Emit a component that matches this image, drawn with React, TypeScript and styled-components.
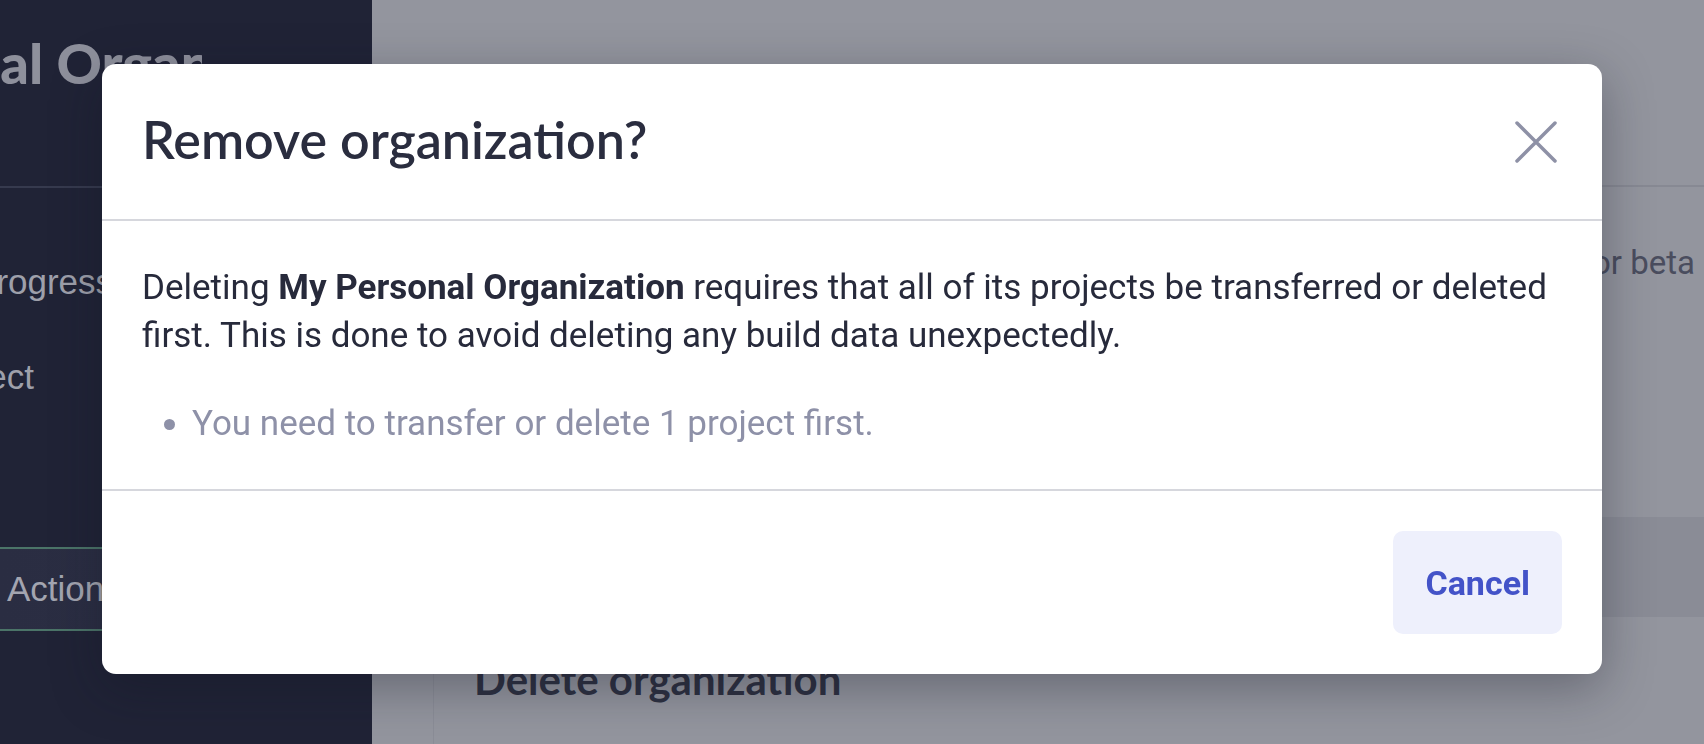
import React from 'react';
import styled, { createGlobalStyle } from 'styled-components';

const GlobalStyle = createGlobalStyle`
  html, body {
    margin: 0;
    height: 100%;
    overflow: hidden;
  }
  #root {
    height: 100%;
  }
`;

const Page = styled.div`
  display: grid;
  grid-template-columns: 372px 1fr;
  height: 100vh;
  overflow: hidden;
`;

const Sidebar = styled.aside`
  background: #202336;
  overflow: hidden;
  display: flex;
  flex-direction: column;
`;

const SidebarHead = styled.div`
  height: 188px;
  box-sizing: border-box;
  padding-top: 31px;
  border-bottom: 2px solid #363a4e;
`;

const OrgName = styled.div`
  width: 470px;
  overflow: hidden;
  font-family: Lato, 'Noto Sans', sans-serif;
  font-weight: 900;
  font-size: 56px;
  line-height: 64px;
  color: #8e909c;
  white-space: nowrap;
  margin-left: -268px;
`;

const NavList = styled.nav`
  display: flex;
  flex-direction: column;
  gap: 47px;
  padding-top: 70px;
`;

const NavItem = styled.div<{ $indent: number }>`
  font-family: 'Liberation Sans', Arial, sans-serif;
  font-size: 35px;
  line-height: 48px;
  color: #9ea0ab;
  white-space: nowrap;
  margin-left: ${(p) => p.$indent}px;
`;

const ActionsButton = styled.div`
  margin-top: 146px;
  height: 80px;
  display: flex;
  align-items: center;
  padding-left: 7px;
  border-top: 2px solid #4b7468;
  border-bottom: 2px solid #4b7468;
  background: linear-gradient(90deg, #2a2d42, #2d3045);
  font-family: 'Liberation Sans', Arial, sans-serif;
  font-size: 35px;
  color: #a3a5b0;
  white-space: nowrap;
`;

const Main = styled.main`
  background: #93959e;
  display: flex;
  flex-direction: column;
  overflow: hidden;
`;

const MainHeader = styled.header`
  height: 187px;
  box-sizing: border-box;
  padding: 55px 0 0 76px;
  border-bottom: 2px solid #878993;
`;

const MainTitle = styled.h1`
  margin: 0;
  font-family: Lato, 'Noto Sans', sans-serif;
  font-weight: 700;
  font-size: 52px;
  color: #2d3041;
  white-space: nowrap;
`;

const Content = styled.div`
  flex: 1;
  display: flex;
  padding-left: 61px;
`;

const Card = styled.section`
  flex: 1;
  display: flex;
  flex-direction: column;
  border-left: 1px solid #8b8d97;
`;

const InfoRow = styled.div`
  height: 330px;
  box-sizing: border-box;
  padding: 52px 9px 0 0;
  text-align: right;
  font-family: Roboto, 'Liberation Sans', sans-serif;
  font-size: 33px;
  line-height: 48px;
  color: #4a4d5e;
  white-space: nowrap;
  overflow: hidden;
`;

const Band = styled.div`
  height: 100px;
  background: #8a8c96;
`;

const DangerSection = styled.div`
  padding: 37px 0 0 40px;
`;

const SectionTitle = styled.h2`
  margin: 0;
  font-family: Lato, 'Noto Sans', sans-serif;
  font-weight: 700;
  font-size: 42px;
  color: #2e3142;
  white-space: nowrap;
`;

const Backdrop = styled.div`
  position: fixed;
  inset: 0;
  padding-bottom: 6px;
  display: flex;
  align-items: center;
  justify-content: center;
`;

const Modal = styled.div`
  width: 1500px;
  background: #ffffff;
  border-radius: 14px;
  box-shadow: 0 14px 50px rgba(18, 20, 34, 0.35);
  display: flex;
  flex-direction: column;
  overflow: hidden;
`;

const ModalHeader = styled.div`
  height: 155px;
  padding: 0 45px 0 40px;
  display: flex;
  align-items: center;
  justify-content: space-between;
  border-bottom: 2px solid #d6d7dd;
`;

const ModalTitle = styled.h2`
  margin: 0 0 5px;
  font-family: Lato, 'Noto Sans', sans-serif;
  font-weight: 600;
  font-size: 52px;
  color: #2a2d3f;
`;

const CloseButton = styled.button`
  width: 42px;
  height: 42px;
  padding: 0;
  border: none;
  background: none;
  cursor: pointer;
  display: flex;
`;

const ModalBody = styled.div`
  padding: 43px 40px 41px;
  border-bottom: 2px solid #d6d7dd;
  font-family: Roboto, 'Liberation Sans', sans-serif;
  font-size: 35px;
  line-height: 48px;
`;

const Message = styled.p`
  margin: 0 0 40px;
  color: #272a3b;

  strong {
    font-weight: 700;
  }
`;

const Reasons = styled.ul`
  margin: 0;
  padding-left: 50px;
  color: #8e91a8;
`;

const ModalFooter = styled.div`
  padding: 40px;
  display: flex;
  justify-content: flex-end;
`;

const CancelButton = styled.button`
  height: 103px;
  padding: 0 32px;
  border: none;
  border-radius: 10px;
  background: #eef0fc;
  color: #4353c8;
  font-family: Roboto, 'Liberation Sans', sans-serif;
  font-weight: 700;
  font-size: 34px;
  cursor: pointer;
`;

const CloseIcon = () => (
  <svg width="42" height="42" viewBox="0 0 42 42" fill="none">
    <path d="M2 2L40 40M40 2L2 40" stroke="#8e91a6" strokeWidth="3.5" strokeLinecap="round" />
  </svg>
);

const App: React.FC = () => {
  return (
    <>
      <GlobalStyle />
      <Page>
        <Sidebar>
          <SidebarHead>
            <OrgName>My Personal Organization</OrgName>
          </SidebarHead>
          <NavList>
            <NavItem $indent={-62}>In progress</NavItem>
            <NavItem $indent={-75}>Project</NavItem>
          </NavList>
          <ActionsButton>Actions</ActionsButton>
        </Sidebar>
        <Main>
          <MainHeader>
            <MainTitle>Organization settings</MainTitle>
          </MainHeader>
          <Content>
            <Card>
              <InfoRow>This organization is signed up for beta</InfoRow>
              <Band />
              <DangerSection>
                <SectionTitle>Delete organization</SectionTitle>
              </DangerSection>
            </Card>
          </Content>
        </Main>
      </Page>

      <Backdrop>
        <Modal role="dialog" aria-modal="true">
          <ModalHeader>
            <ModalTitle>Remove organization?</ModalTitle>
            <CloseButton aria-label="Close">
              <CloseIcon />
            </CloseButton>
          </ModalHeader>
          <ModalBody>
            <Message>
              Deleting <strong>My Personal Organization</strong> requires that all of its projects be
              transferred or deleted first. This is done to avoid deleting any build data unexpectedly.
            </Message>
            <Reasons>
              <li>You need to transfer or delete 1 project first.</li>
            </Reasons>
          </ModalBody>
          <ModalFooter>
            <CancelButton>Cancel</CancelButton>
          </ModalFooter>
        </Modal>
      </Backdrop>
    </>
  );
};

export default App;
